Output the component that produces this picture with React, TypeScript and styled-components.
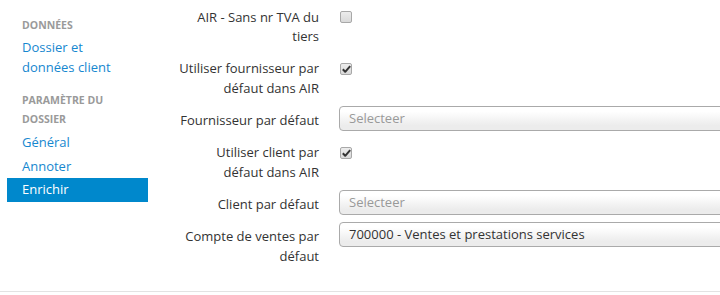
import React from 'react';
import styled, { createGlobalStyle } from 'styled-components';

const GlobalStyle = createGlobalStyle`
  html, body {
    margin: 0;
    padding: 0;
    background: #fff;
    font-family: 'Open Sans', 'Liberation Sans', sans-serif;
    font-size: 13px;
    color: #333;
  }
  * { box-sizing: border-box; }
`;

const Page = styled.div`
  display: flex;
  height: 292px;
  border-bottom: 1px solid #e3e3e3;
  overflow: hidden;
`;

const Sidebar = styled.nav`
  width: 141px;
  margin-left: 7px;
  padding-top: 4px;
  flex-shrink: 0;
`;

const SideHeader = styled.div`
  margin: 12px 0 3px;
  padding: 0 15px;
  font-size: 10.5px;
  font-weight: 700;
  line-height: 18.5px;
  color: #9a9a9a;
  text-transform: uppercase;
  &:first-child {
    margin-top: 11.5px;
    margin-bottom: 2px;
  }
`;

const SideLink = styled.a<{ $active?: boolean }>`
  display: block;
  padding: 2px 15px;
  line-height: 19.5px;
  font-size: 13px;
  text-decoration: none;
  color: ${({ $active }) => ($active ? '#fff' : '#1687cf')};
  background: ${({ $active }) => ($active ? '#0088cc' : 'transparent')};
`;

const Form = styled.div`
  flex: 1;
  padding: 2.5px 0 0 28px;
  display: flex;
  flex-direction: column;
  gap: 7.5px;
  min-width: 0;
`;

const Row = styled.div`
  display: grid;
  grid-template-columns: 143px 1fr;
  column-gap: 20px;
  align-items: start;
`;

const Label = styled.label`
  text-align: right;
  padding-top: 5px;
  line-height: 19.5px;
  color: #333;
`;

const Field = styled.div`
  min-width: 0;
  margin-right: -40px;
`;

const CheckBox = styled.span`
  display: inline-flex;
  align-items: center;
  justify-content: center;
  width: 12px;
  height: 12px;
  margin-top: 8.5px;
  margin-left: 1px;
  border: 1px solid #a8a8a8;
  border-radius: 2px;
  background: linear-gradient(#ececec, #d9d9d9);
  svg {
    display: block;
  }
`;

const Select = styled.div<{ $placeholder?: boolean }>`
  height: 25px;
  padding: 0 9px;
  line-height: 23px;
  border: 1px solid #aaa;
  border-radius: 4px;
  background: linear-gradient(#fff 20%, #ececec 80%);
  color: ${({ $placeholder }) => ($placeholder ? '#999' : '#333')};
  white-space: nowrap;
  overflow: hidden;
`;

const Check = ({ checked }: { checked?: boolean }) => (
  <CheckBox>
    {checked && (
      <svg width="9" height="8" viewBox="0 0 9 8">
        <path d="M0.8 4.3 L3.2 6.8 L8.2 1.2" fill="none" stroke="#333" strokeWidth="2" strokeLinejoin="round" />
      </svg>
    )}
  </CheckBox>
);

export default function App() {
  return (
    <>
      <GlobalStyle />
      <Page>
        <Sidebar>
          <SideHeader>Données</SideHeader>
          <SideLink href="#">Dossier et<br />données client</SideLink>
          <SideHeader>Paramètre du<br />dossier</SideHeader>
          <SideLink href="#">Général</SideLink>
          <SideLink href="#">Annoter</SideLink>
          <SideLink href="#" $active>Enrichir</SideLink>
        </Sidebar>
        <Form>
          <Row>
            <Label>AIR - Sans nr TVA du tiers</Label>
            <Field><Check /></Field>
          </Row>
          <Row>
            <Label>Utiliser fournisseur par défaut dans AIR</Label>
            <Field><Check checked /></Field>
          </Row>
          <Row>
            <Label>Fournisseur par défaut</Label>
            <Field><Select $placeholder>Selecteer</Select></Field>
          </Row>
          <Row>
            <Label>Utiliser client par défaut dans AIR</Label>
            <Field><Check checked /></Field>
          </Row>
          <Row>
            <Label>Client par défaut</Label>
            <Field><Select $placeholder>Selecteer</Select></Field>
          </Row>
          <Row>
            <Label>Compte de ventes par défaut</Label>
            <Field><Select>700000 - Ventes et prestations services</Select></Field>
          </Row>
        </Form>
      </Page>
    </>
  );
}
